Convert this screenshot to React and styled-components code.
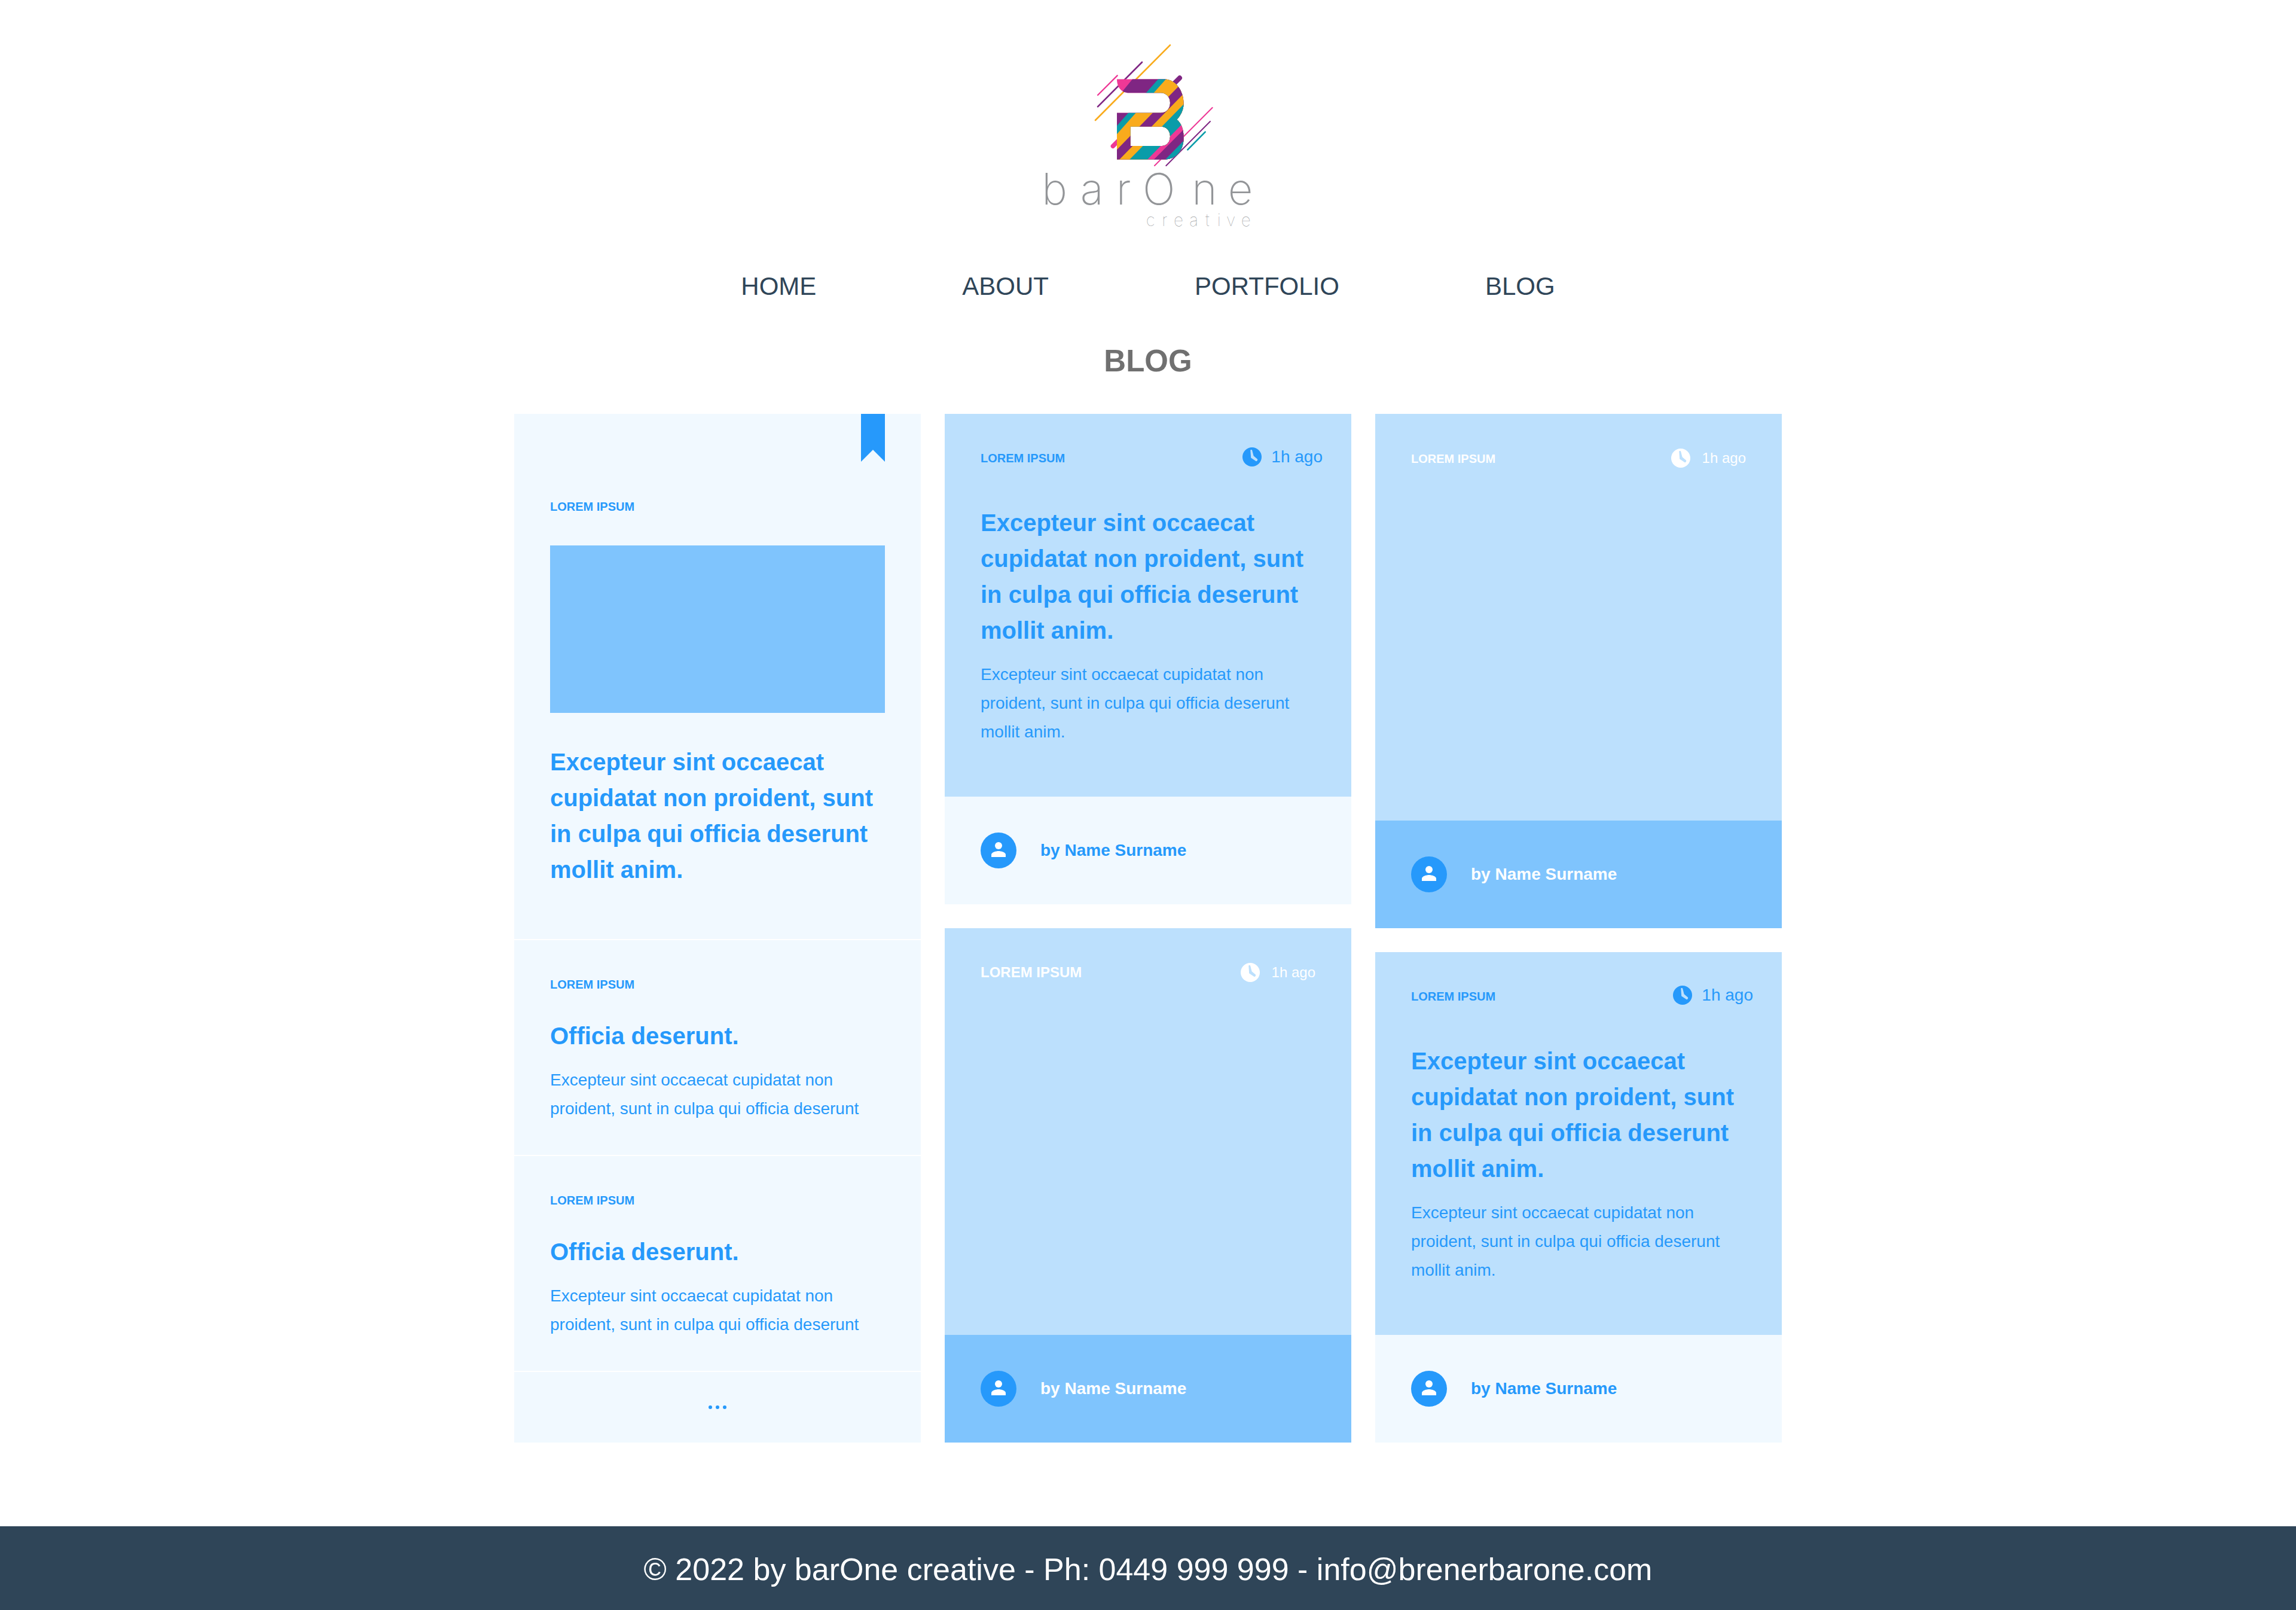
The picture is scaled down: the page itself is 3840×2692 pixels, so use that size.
import React from "react";
import styled, { createGlobalStyle } from "styled-components";

const color = {
  navy: "#2f4558",
  grey: "#707070",
  blue: "#2699fb",
  sky: "#7fc4fd",
  mist: "#bce0fd",
  pale: "#f1f9ff",
  white: "#ffffff",
};

const GlobalStyle = createGlobalStyle`
  *, *::before, *::after { box-sizing: border-box; }
  body {
    margin: 0;
    background: ${color.white};
    font-family: "Liberation Sans", Arial, Helvetica, sans-serif;
  }
  h1, h2, p { margin: 0; }
`;

const Page = styled.div`
  display: flex;
  flex-direction: column;
  min-height: 100vh;
`;

const Header = styled.header`
  display: flex;
  flex-direction: column;
  align-items: center;
  padding-top: 50px;
`;

const LogoLink = styled.a`
  display: block;
`;

const LogoArt = styled.svg`
  display: block;
  width: 400px;
  height: 350px;
`;

const Nav = styled.nav`
  display: flex;
  flex-wrap: wrap;
  justify-content: center;
  gap: 24px 244px;
  margin-top: 55px;
`;

const NavLink = styled.a`
  color: ${color.navy};
  font-size: 42px;
  line-height: 48px;
  text-decoration: none;
`;

const Main = styled.main`
  flex: 1;
  display: flex;
  flex-direction: column;
  align-items: center;
  padding: 71px 40px 140px;
`;

const PageTitle = styled.h1`
  color: ${color.grey};
  font-size: 51px;
  line-height: 60px;
`;

const Board = styled.div`
  display: grid;
  grid-template-columns: repeat(3, minmax(0, 1fr));
  gap: 40px;
  width: 100%;
  max-width: 2120px;
  margin-top: 58px;
`;

const Column = styled.div`
  display: flex;
  flex-direction: column;
  gap: ${(p) => p.$gap};
`;

const Panel = styled.article`
  position: relative;
  background: ${color.pale};
  color: ${color.blue};
  padding: ${(p) => p.$pad};
`;

const Ribbon = styled.svg`
  position: absolute;
  top: 0;
  right: 60px;
  width: 40px;
  height: 80px;
`;

const Tag = styled.p`
  font-size: ${(p) => (p.$large ? 24 : 20)}px;
  font-weight: bold;
  line-height: 24px;
`;

const Picture = styled.div`
  height: 280px;
  margin: 53px 0 52px;
  background: ${color.sky};
`;

const Heading = styled.h2`
  font-size: 40px;
  line-height: 60px;
  margin-top: ${(p) => p.$space || "0"};
`;

const Excerpt = styled.p`
  margin-top: 20px;
  font-size: 28px;
  line-height: 48px;
`;

const MoreButton = styled.button`
  flex: 1;
  display: flex;
  align-items: center;
  justify-content: center;
  min-height: 118px;
  padding: 0;
  border: 0;
  background: ${color.pale};
  color: ${color.blue};
  cursor: pointer;
`;

const Card = styled.article`
  display: flex;
  flex-direction: column;
`;

const CardBody = styled.div`
  min-height: ${(p) => (p.$cover ? "680px" : "0")};
  padding: ${(p) => (p.$cover ? "58px 60px 60px" : "56px 60px 84px")};
  background: ${color.mist};
  color: ${(p) => (p.$cover ? color.white : color.blue)};
`;

const CardHead = styled.div`
  display: flex;
  align-items: baseline;
  justify-content: space-between;
  margin-right: ${(p) => (p.$cover ? "0" : "-12px")};
`;

const Posted = styled.div`
  display: flex;
  align-items: center;
  gap: ${(p) => (p.$cover ? 20 : 16)}px;
`;

const PostedTime = styled.time`
  align-self: baseline;
  font-size: ${(p) => (p.$cover ? 24 : 28)}px;
  line-height: 32px;
`;

const Byline = styled.footer`
  display: flex;
  align-items: center;
  gap: 40px;
  height: 180px;
  padding: 0 60px;
  background: ${(p) => (p.$cover ? color.sky : color.pale)};
  color: ${(p) => (p.$cover ? color.white : color.blue)};
  font-size: 28px;
  font-weight: bold;
`;

const SiteFooter = styled.footer`
  padding: 42px 40px 38px;
  background: ${color.navy};
  color: ${color.white};
  font-size: 52px;
  line-height: 60px;
  text-align: center;
`;

const MailLink = styled.a`
  color: inherit;
  text-decoration: none;
`;

const ink = { pink: "#ee3896", purple: "#7f2683", teal: "#0a9ca9", amber: "#f9ab1c" };

// Each stripe fills everything right of a slanted edge, given by its x at y=200 and y=700.
const stripes = [
  [561, 148, ink.purple],
  [693, 249, ink.teal],
  [732, 286, ink.amber],
  [834, 347, ink.purple],
  [896, 408, ink.amber],
  [948, 459, ink.teal],
  [1039, 548, ink.pink],
  [1077, 580, ink.purple],
  [1127, 638, ink.teal],
];

// Loose strokes around the letter: x1, y1, x2, y2, width, colour.
const rays = [
  [348, 327, 446, 229, 7, ink.pink],
  [348, 385, 570, 162, 8, ink.purple],
  [336, 453, 711, 76, 8, ink.amber],
  [725, 275, 759, 241, 24, ink.purple],
  [424, 583, 460, 547, 22, ink.pink],
  [633, 681, 923, 390, 6, ink.pink],
  [691, 681, 912, 459, 6, ink.purple],
  [799, 601, 887, 512, 8, ink.teal],
];

const Wordmark = styled.text`
  font-family: Inter, Roboto, "Liberation Sans", sans-serif;
  font-size: ${(p) => p.$size}px;
  font-weight: ${(p) => p.$weight};
  fill: ${(p) => p.$fill};
`;

function Logo() {
  return (
    <LogoArt viewBox="0 0 1200 1050" role="img" aria-label="barOne creative">
      <defs>
        <clipPath id="mark">
          <path
            clipRule="evenodd"
            d="M444 247H685C738 250 779 304 779 370C779 402 764 430 745 450C766 466 779 498 779 540C779 604 742 648 685 650H444V416H665C692 416 711 395 711 366C711 336 690 316 665 316H505C468 316 444 289 444 247ZM512 485V582H670C694 582 711 562 711 534C711 505 692 485 665 485Z"
          />
        </clipPath>
      </defs>
      {rays.map(([x1, y1, x2, y2, w, c]) => (
        <line key={`${x1}-${y1}`} x1={x1} y1={y1} x2={x2} y2={y2} stroke={c} strokeWidth={w} strokeLinecap="round" />
      ))}
      <g clipPath="url(#mark)">
        <rect x="400" y="200" width="400" height="500" fill={ink.pink} />
        {stripes.map(([top, bottom, c]) => (
          <polygon key={top} points={`${top},200 1300,200 1300,700 ${bottom},700`} fill={c} />
        ))}
      </g>
      <Wordmark $size={217} $weight={200} $fill="#939598" y="875" x="67 260 440 573 820 1001">
        barOne
      </Wordmark>
      <Wordmark $size={84} $weight={100} $fill="#a1a3a6" y="984" x="590 670 729 808 888 947 993 1067">
        creative
      </Wordmark>
    </LogoArt>
  );
}

function ClockIcon({ hands }) {
  return (
    <svg width="32" height="32" viewBox="0 0 32 32" aria-hidden="true">
      <circle cx="16" cy="16" r="16" fill="currentColor" />
      <path
        fill={hands}
        d="M13.3 5Q13.3 4 14.3 4H15.2Q16 4 16.2 5L18.6 14.3L24.8 19.6Q25.6 20.5 25 21.5L24.2 22.7Q23.4 23.5 22.5 23L14.2 17.4Z"
      />
    </svg>
  );
}

function AvatarIcon() {
  return (
    <svg width="60" height="60" viewBox="0 0 60 60" aria-hidden="true">
      <circle cx="30" cy="30" r="30" fill={color.blue} />
      <circle cx="30" cy="22" r="6" fill={color.white} />
      <path d="M30 31c-4 0-12 2-12 6v4h24v-4c0-4-8-6-12-6z" fill={color.white} />
    </svg>
  );
}

function PostCard({ cover, largeTag }) {
  return (
    <Card>
      <CardBody $cover={cover}>
        <CardHead $cover={cover}>
          <Tag $large={largeTag}>LOREM IPSUM</Tag>
          <Posted $cover={cover}>
            <ClockIcon hands={color.mist} />
            <PostedTime $cover={cover}>1h ago</PostedTime>
          </Posted>
        </CardHead>
        {!cover && (
          <>
            <Heading $space="64px">
              Excepteur sint occaecat cupidatat non proident, sunt in culpa qui officia deserunt mollit anim.
            </Heading>
            <Excerpt>
              Excepteur sint occaecat cupidatat non proident, sunt in culpa qui officia deserunt mollit anim.
            </Excerpt>
          </>
        )}
      </CardBody>
      <Byline $cover={cover}>
        <AvatarIcon />
        by Name Surname
      </Byline>
    </Card>
  );
}

function BriefPanel() {
  return (
    <Panel $pad="62px 60px 53px">
      <Tag>LOREM IPSUM</Tag>
      <Heading $space="44px">Officia deserunt.</Heading>
      <Excerpt>Excepteur sint occaecat cupidatat non proident, sunt in culpa qui officia deserunt</Excerpt>
    </Panel>
  );
}

const links = ["HOME", "ABOUT", "PORTFOLIO", "BLOG"];

export default function App() {
  return (
    <Page>
      <GlobalStyle />
      <Header>
        <LogoLink href="#home">
          <Logo />
        </LogoLink>
        <Nav>
          {links.map((name) => (
            <NavLink key={name} href={`#${name.toLowerCase()}`}>
              {name}
            </NavLink>
          ))}
        </Nav>
      </Header>
      <Main>
        <PageTitle>BLOG</PageTitle>
        <Board>
          <Column $gap="2px">
            <Panel $pad="143px 60px 86px">
              <Ribbon viewBox="0 0 40 80" aria-hidden="true">
                <path d="M0 0H40V80L20 60L0 80Z" fill={color.blue} />
              </Ribbon>
              <Tag>LOREM IPSUM</Tag>
              <Picture />
              <Heading>
                Excepteur sint occaecat cupidatat non proident, sunt in culpa qui officia deserunt mollit anim.
              </Heading>
            </Panel>
            <BriefPanel />
            <BriefPanel />
            <MoreButton type="button" aria-label="More posts">
              <svg width="30" height="6" viewBox="0 0 30 6" fill="currentColor" aria-hidden="true">
                <circle cx="3" cy="3" r="3" />
                <circle cx="15" cy="3" r="3" />
                <circle cx="27" cy="3" r="3" />
              </svg>
            </MoreButton>
          </Column>
          <Column $gap="40px">
            <PostCard />
            <PostCard cover largeTag />
          </Column>
          <Column $gap="40px">
            <PostCard cover />
            <PostCard />
          </Column>
        </Board>
      </Main>
      <SiteFooter>
        © 2022 by barOne creative - Ph: 0449 999 999 -{" "}
        <MailLink href="mailto:info@brenerbarone.com">info@brenerbarone.com</MailLink>
      </SiteFooter>
    </Page>
  );
}
